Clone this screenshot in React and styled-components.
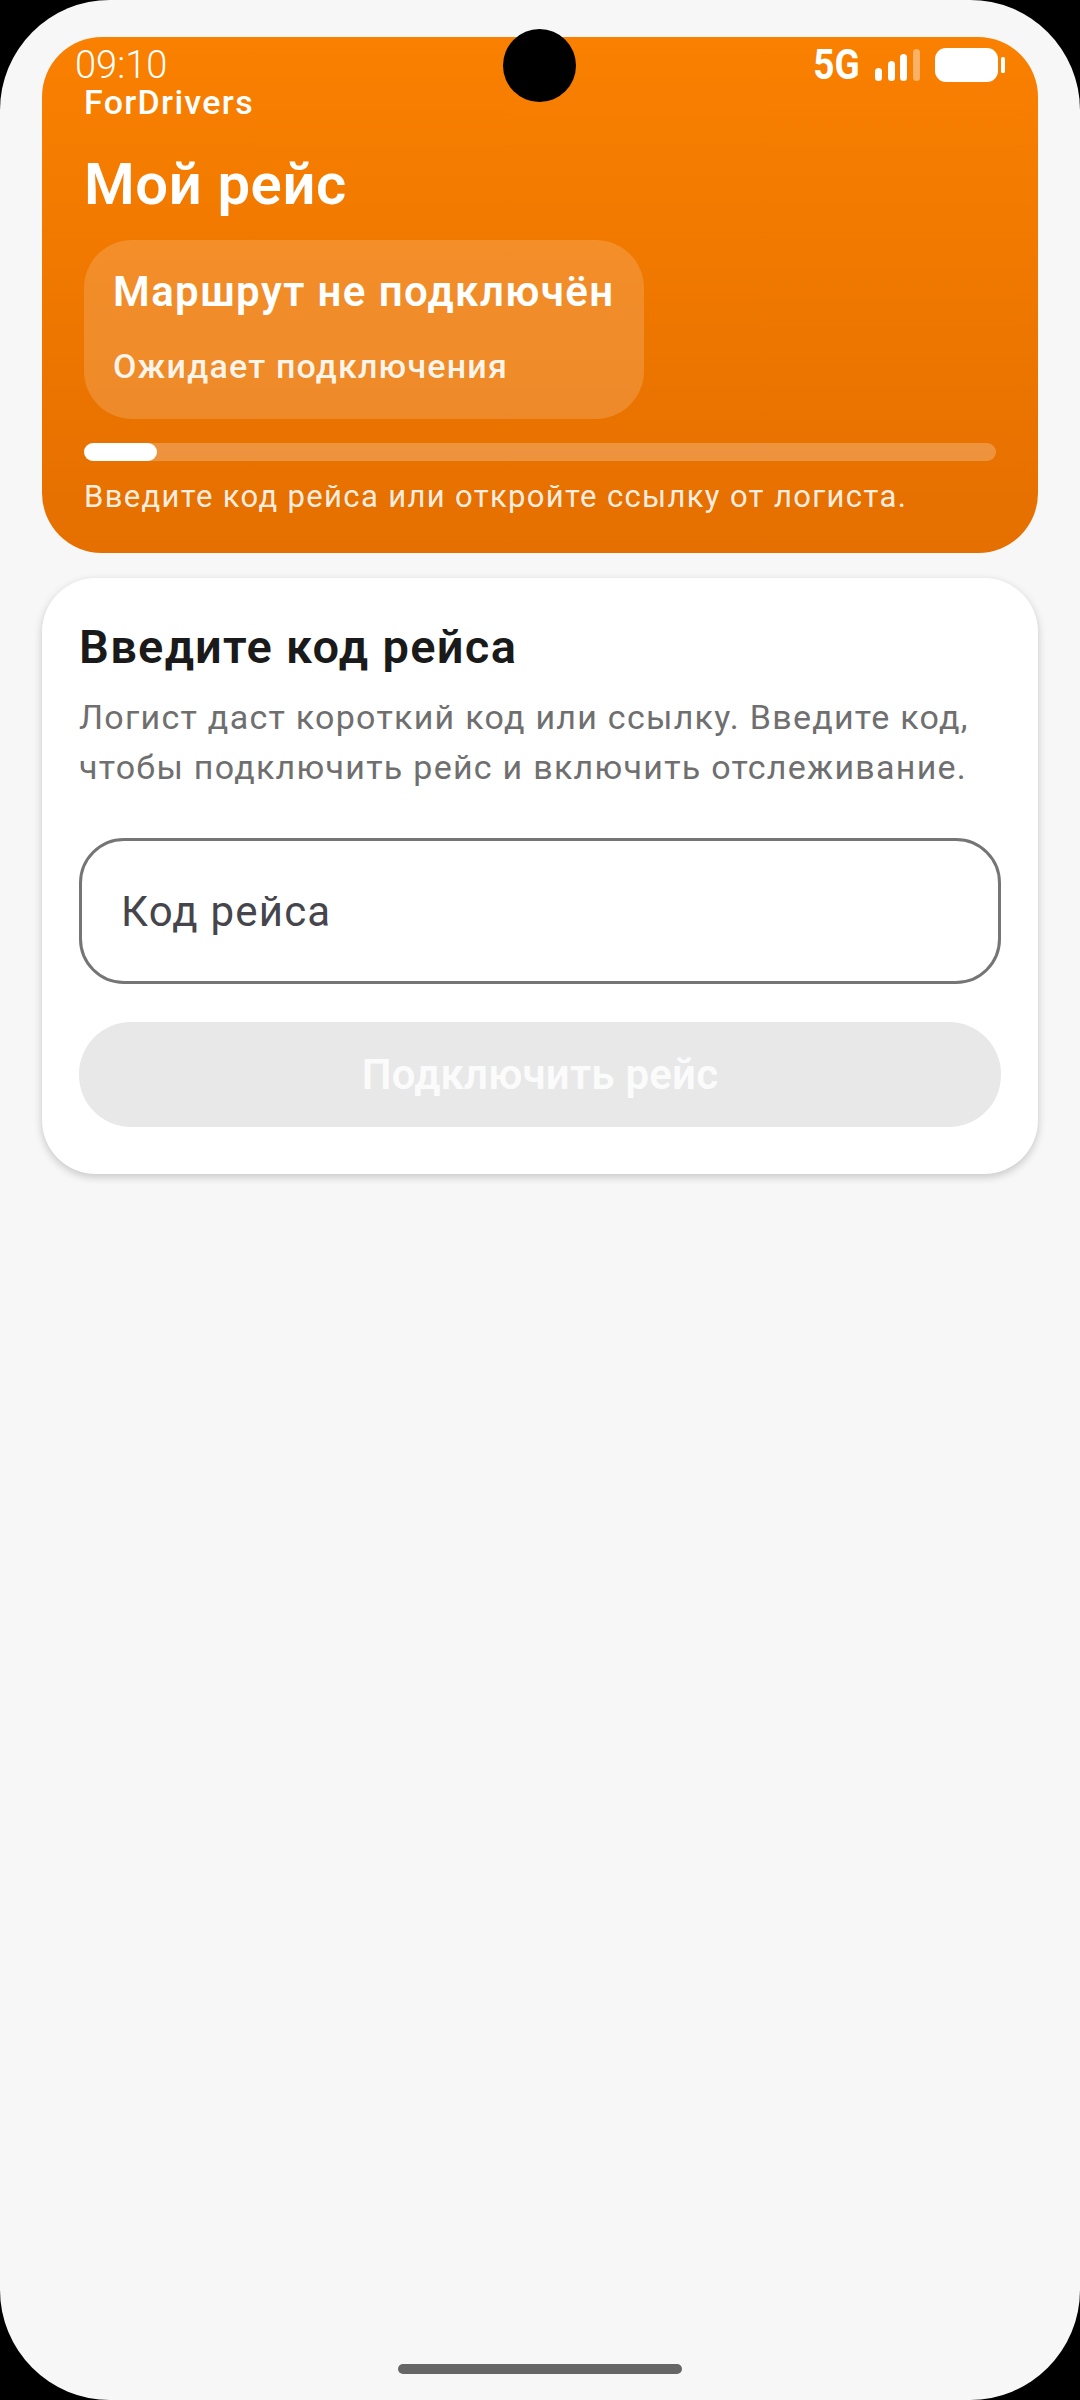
import React from "react";
import styled, { createGlobalStyle } from "styled-components";

const GlobalStyle = createGlobalStyle`
  html, body {
    margin: 0;
    padding: 0;
    background: #000;
  }
  * {
    box-sizing: border-box;
  }
`;

const Screen = styled.div`
  position: relative;
  width: 1080px;
  height: 2400px;
  padding: 37px 42px 0;
  overflow: hidden;
  border-radius: 110px;
  background: #f7f7f7;
  font-family: Roboto, "Noto Sans", sans-serif;
`;

const StatusBar = styled.div`
  position: absolute;
  top: 45px;
  left: 75px;
  right: 75px;
  height: 40px;
  display: flex;
  align-items: center;
  justify-content: space-between;
  color: #fff;
`;

const Time = styled.span`
  font-size: 38px;
  font-weight: 350;
  line-height: 40px;
`;

const StatusIcons = styled.div`
  display: flex;
  align-items: center;
  gap: 15px;
`;

const Network = styled.span`
  font-size: 42px;
  font-weight: 700;
  line-height: 40px;
  transform: scaleX(0.88);
  transform-origin: right center;
`;

const Camera = styled.div`
  position: absolute;
  top: 29px;
  left: 503px;
  width: 73px;
  height: 73px;
  border-radius: 50%;
  background: #000;
`;

const Hero = styled.section`
  height: 516px;
  padding: 45px 42px 35px;
  border-radius: 60px;
  background: linear-gradient(180deg, #f98000 0%, #e56f00 100%);
  color: #fff;
`;

const Brand = styled.div`
  font-size: 34px;
  font-weight: 500;
  line-height: 40px;
  letter-spacing: 1.3px;
`;

const PageTitle = styled.h1`
  margin: 27px 0 21px;
  font-size: 58px;
  font-weight: 600;
  line-height: 70px;
  letter-spacing: 0.6px;
`;

const RouteCard = styled.div`
  width: 560px;
  height: 179px;
  padding: 26px 29px 32px;
  border-radius: 48px;
  background: rgba(255, 255, 255, 0.16);
`;

const RouteName = styled.div`
  font-size: 42px;
  font-weight: 600;
  line-height: 52px;
  letter-spacing: 1.4px;
  white-space: nowrap;
`;

const RouteState = styled.div`
  margin-top: 28px;
  font-size: 34px;
  font-weight: 500;
  line-height: 40px;
  letter-spacing: 1.2px;
  color: rgba(255, 255, 255, 0.92);
`;

const Track = styled.div`
  height: 18px;
  margin-top: 24px;
  border-radius: 9px;
  background: rgba(255, 255, 255, 0.24);
`;

const TrackFill = styled.div`
  height: 100%;
  border-radius: 9px;
  background: #fff;
`;

const Hint = styled.p`
  margin: 16px 0 0;
  font-size: 31px;
  line-height: 40px;
  letter-spacing: 1.35px;
  white-space: nowrap;
  color: rgba(255, 255, 255, 0.9);
`;

const Card = styled.section`
  height: 596px;
  margin-top: 25px;
  padding: 41px 37px 47px;
  border-radius: 54px;
  background: #fff;
  box-shadow: 0 3px 8px rgba(0, 0, 0, 0.2);
`;

const CardTitle = styled.h2`
  margin: 0;
  font-size: 47px;
  font-weight: 600;
  line-height: 56px;
  letter-spacing: 1.3px;
  color: #1a1a1a;
`;

const Description = styled.p`
  margin: 17px 0 0;
  font-size: 34px;
  line-height: 50px;
  letter-spacing: 1.27px;
  color: #6f6f6f;
  white-space: nowrap;
`;

const CodeField = styled.div`
  display: flex;
  align-items: center;
  height: 146px;
  margin-top: 46px;
  padding: 0 39px;
  border: 3px solid #757575;
  border-radius: 45px;
  font-size: 42px;
  letter-spacing: 1.2px;
  color: #45454b;
`;

const ConnectButton = styled.button`
  display: block;
  width: 100%;
  height: 105px;
  margin-top: 38px;
  padding: 0;
  border: 0;
  border-radius: 52px;
  background: #e8e8e8;
  color: #fbfbfb;
  font-family: inherit;
  font-size: 42px;
  font-weight: 600;
  letter-spacing: 0.2px;
`;

const HomeBar = styled.div`
  position: absolute;
  left: 398px;
  bottom: 26px;
  width: 284px;
  height: 10px;
  border-radius: 5px;
  background: #666;
`;

const SignalIcon = () => (
  <svg width="45" height="32" viewBox="0 0 45 32" fill="#fff">
    <rect x="0" y="19" width="7" height="13" rx="3.5" />
    <rect x="13" y="12" width="7" height="20" rx="3.5" />
    <rect x="25" y="5" width="7" height="27" rx="3.5" />
    <rect x="38" y="0" width="7" height="32" rx="3.5" opacity="0.4" />
  </svg>
);

const BatteryIcon = () => (
  <svg width="70" height="34" viewBox="0 0 70 34" fill="#fff">
    <rect x="0" y="0" width="63" height="34" rx="11" />
    <rect x="66" y="9" width="4" height="16" rx="1.5" />
  </svg>
);

export default function App() {
  return (
    <>
      <GlobalStyle />
      <Screen>
        <Hero>
          <Brand>ForDrivers</Brand>
          <PageTitle>Мой рейс</PageTitle>
          <RouteCard>
            <RouteName>Маршрут не подключён</RouteName>
            <RouteState>Ожидает подключения</RouteState>
          </RouteCard>
          <Track>
            <TrackFill style={{ width: "8%" }} />
          </Track>
          <Hint>Введите код рейса или откройте ссылку от логиста.</Hint>
        </Hero>
        <Card>
          <CardTitle>Введите код рейса</CardTitle>
          <Description>
            Логист даст короткий код или ссылку. Введите код,
            <br />
            чтобы подключить рейс и включить отслеживание.
          </Description>
          <CodeField>Код рейса</CodeField>
          <ConnectButton disabled>Подключить рейс</ConnectButton>
        </Card>
        <StatusBar>
          <Time>09:10</Time>
          <StatusIcons>
            <Network>5G</Network>
            <SignalIcon />
            <BatteryIcon />
          </StatusIcons>
        </StatusBar>
        <Camera />
        <HomeBar />
      </Screen>
    </>
  );
}
